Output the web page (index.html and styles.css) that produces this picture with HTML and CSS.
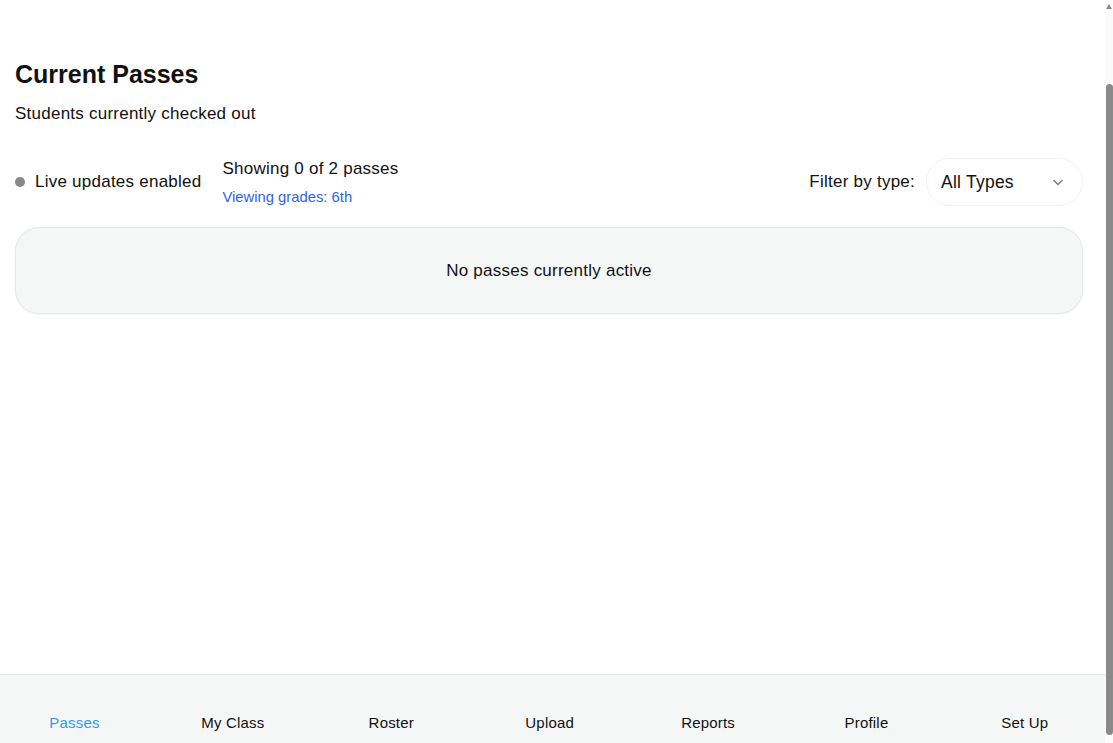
FILE: index.html
```html
<!DOCTYPE html>
<html lang="en">
<head>
<meta charset="utf-8">
<title>Current Passes</title>
<link rel="stylesheet" href="styles.css">
</head>
<body>
<div class="app">
  <main class="main">
    <h1 class="title">Current Passes</h1>
    <p class="subtitle">Students currently checked out</p>
    <div class="toolbar">
      <div class="live"><span class="dot"></span><span>Live updates enabled</span></div>
      <div class="count">
        <div class="showing">Showing 0 of 2 passes</div>
        <div class="grades">Viewing grades: 6th</div>
      </div>
      <div class="filter">
        <span class="filter-label">Filter by type:</span>
        <div class="select">
          <span>All Types</span>
          <svg class="chev" width="14" height="14" viewBox="0 0 14 14"><path d="M2.5 5 L7 9.5 L11.5 5" fill="none" stroke="#777" stroke-width="1.3"/></svg>
        </div>
      </div>
    </div>
    <div class="empty">No passes currently active</div>
  </main>
  <nav class="nav">
    <a class="nav-item active">Passes</a>
    <a class="nav-item">My Class</a>
    <a class="nav-item">Roster</a>
    <a class="nav-item">Upload</a>
    <a class="nav-item">Reports</a>
    <a class="nav-item">Profile</a>
    <a class="nav-item">Set Up</a>
  </nav>
</div>
<div class="scrollbar"><span class="arrow"></span><span class="thumb"></span></div>
</body>
</html>
```

FILE: styles.css
```css
* { box-sizing: border-box; }
html, body { margin: 0; height: 100%; overflow: hidden; }
body {
  font-family: "Liberation Sans", Arial, sans-serif;
  color: #111;
  background: #fff;
}
.app {
  width: 1105px;
  height: 743px;
  display: flex;
  flex-direction: column;
}
.main {
  flex: 1;
  padding: 60px 22px 0 15px;
}
.title {
  margin: 0;
  font-size: 25px;
  font-weight: 700;
  line-height: 28px;
  color: #111;
}
.subtitle {
  margin: 16px 0 0;
  font-size: 17px;
  letter-spacing: 0.24px;
  line-height: 20px;
}
.toolbar {
  display: flex;
  align-items: center;
  margin-top: 34px;
  font-size: 17px;
  letter-spacing: 0.24px;
}
.live {
  display: flex;
  align-items: center;
  gap: 10px;
  margin-right: 21px;
}
.dot {
  width: 10px;
  height: 10px;
  border-radius: 50%;
  background: #86878a;
}
.count { display: flex; flex-direction: column; gap: 10px; margin-top: -1px; }
.showing { line-height: 20px; }
.grades { font-size: 14.8px; letter-spacing: 0; line-height: 16px; color: #2f63e6; }
.filter {
  margin-left: auto;
  display: flex;
  align-items: center;
  gap: 11px;
}
.select {
  width: 157px;
  height: 48px;
  border: 1px solid #f2f3f4;
  border-radius: 24px;
  display: flex;
  align-items: center;
  justify-content: space-between;
  padding: 0 17px 0 14px;
  font-size: 17.5px;
}
.chev { display: block; }
.empty {
  margin-top: 21px;
  height: 87px;
  border: 1px solid #e3e8ea;
  border-radius: 24px;
  background: #f5f7f7;
  display: flex;
  align-items: center;
  justify-content: center;
  font-size: 17px;
  letter-spacing: 0.24px;
  box-shadow: 0 1px 2px rgba(0,0,0,0.04);
}
.nav {
  height: 69px;
  border-top: 1px solid #e2e8ec;
  background: #f5f7f7;
  display: grid;
  grid-template-columns: repeat(7, 1fr);
  column-gap: 9.4px;
  align-items: end;
  padding: 0 5.6px 12px 0;
}
.nav-item {
  text-align: center;
  font-size: 15px;
  letter-spacing: 0.2px;
  line-height: 16px;
  color: #111;
}
.nav-item.active { color: #2f9bea; }
.scrollbar {
  position: fixed;
  top: 0;
  right: 0;
  width: 8px;
  height: 743px;
  background: #fbfbfb;
}
.arrow {
  position: absolute;
  top: 4px;
  left: 1px;
  width: 0;
  height: 0;
  border-left: 3px solid transparent;
  border-right: 3px solid transparent;
  border-bottom: 5px solid #8a8a8a;
}
.thumb {
  position: absolute;
  top: 84px;
  left: 1px;
  width: 7px;
  height: 651px;
  border-radius: 4px;
  background: #8a8a8a;
}
```
